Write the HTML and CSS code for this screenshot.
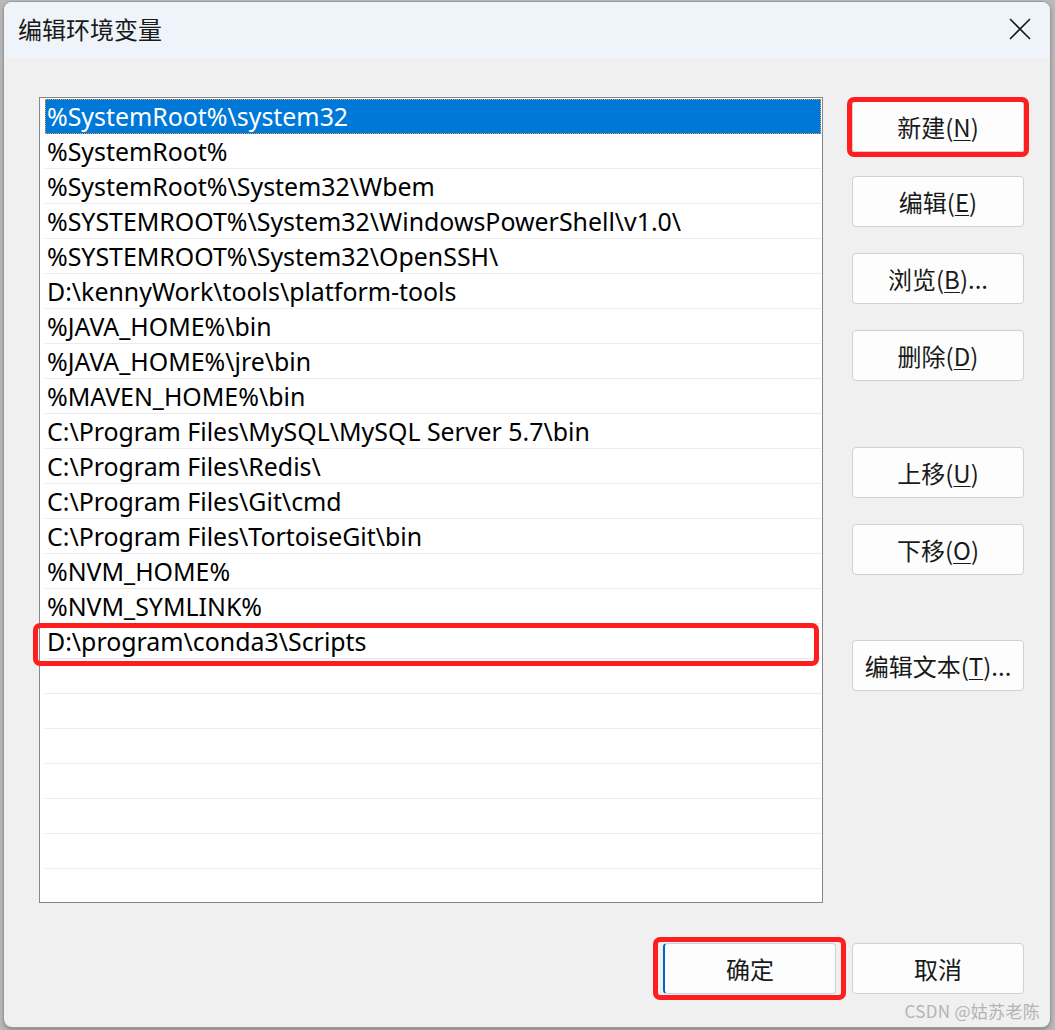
FILE: index.html
```html
<!DOCTYPE html>
<html lang="zh-CN">
<head>
<meta charset="utf-8">
<title>编辑环境变量</title>
<link rel="stylesheet" href="styles.css">
</head>
<body>
<div class="window">
  <div class="titlebar">
    <span class="title">编辑环境变量</span>
    <span class="close">
      <svg width="22" height="22" viewBox="0 0 22 22"><path d="M1 1 L21 21 M21 1 L1 21" stroke="#1a1a1a" stroke-width="1.6" fill="none"/></svg>
    </span>
  </div>
  <div class="content">
    <div class="main">
      <div class="list">
        <div class="row selected">%SystemRoot%\system32</div>
        <div class="row">%SystemRoot%</div>
        <div class="row">%SystemRoot%\System32\Wbem</div>
        <div class="row">%SYSTEMROOT%\System32\WindowsPowerShell\v1.0\</div>
        <div class="row">%SYSTEMROOT%\System32\OpenSSH\</div>
        <div class="row">D:\kennyWork\tools\platform-tools</div>
        <div class="row">%JAVA_HOME%\bin</div>
        <div class="row">%JAVA_HOME%\jre\bin</div>
        <div class="row">%MAVEN_HOME%\bin</div>
        <div class="row">C:\Program Files\MySQL\MySQL Server 5.7\bin</div>
        <div class="row">C:\Program Files\Redis\</div>
        <div class="row">C:\Program Files\Git\cmd</div>
        <div class="row">C:\Program Files\TortoiseGit\bin</div>
        <div class="row">%NVM_HOME%</div>
        <div class="row">%NVM_SYMLINK%</div>
        <div class="row">D:\program\conda3\Scripts</div>
        <div class="row"></div>
        <div class="row"></div>
        <div class="row"></div>
        <div class="row"></div>
        <div class="row"></div>
        <div class="row"></div>
        <div class="row last"></div>
        <div class="mark mark-row"></div>
      </div>
      <div class="side">
        <button class="btn b1">新建(<u>N</u>)<span class="mark mark-btn"></span></button>
        <button class="btn b2">编辑(<u>E</u>)</button>
        <button class="btn b3">浏览(<u>B</u>)...</button>
        <button class="btn b3">删除(<u>D</u>)</button>
        <button class="btn b5">上移(<u>U</u>)</button>
        <button class="btn b3">下移(<u>O</u>)</button>
        <button class="btn b7">编辑文本(<u>T</u>)...</button>
      </div>
    </div>
    <div class="footer">
      <button class="btn ok">确定<span class="mark mark-ok"></span></button>
      <button class="btn cancel">取消</button>
    </div>
  </div>
  <div class="watermark">CSDN @姑苏老陈</div>
</div>
</body>
</html>
```
FILE: styles.css
```css
* { box-sizing: border-box; }
html, body { margin: 0; padding: 0; }
body {
  width: 1055px;
  height: 1030px;
  overflow: hidden;
  background: #b9b9b9;
  font-family: "Noto Sans", "Noto Sans CJK SC", sans-serif;
  padding: 2px 0 0 4px;
}
.window {
  position: relative;
  width: 1046px;
  height: 1025px;
  background: #f0f0f0;
  border-radius: 8px;
  overflow: hidden;
  box-shadow: 0 0 0 1px #9a9a9a, 0 2px 4px rgba(0,0,0,0.35);
}
.titlebar {
  height: 56px;
  background: #eef4f9;
  display: flex;
  align-items: center;
  justify-content: space-between;
  padding: 0 14px 0 14px;
}
.title {
  font-size: 24px;
  color: #1a1a1a;
  font-family: "Noto Sans CJK SC", sans-serif;
  margin-top: -4px;
}
.close { display: flex; margin-right: 5px; margin-top: -2px; }
.content {
  padding: 39px 26px 0 35px;
}
.main {
  display: flex;
  gap: 29px;
}
.list {
  position: relative;
  width: 784px;
  height: 806px;
  background: #fff;
  border: 1px solid #828790;
  padding: 1px 1px 0 5px;
  overflow: visible;
}
.row {
  height: 35px;
  border-bottom: 1px solid #ebebeb;
  font-size: 24.9px;
  line-height: 34px;
  padding-left: 2px;
  color: #000;
  white-space: nowrap;
}
.row.last { border-bottom: none; }
.row.selected {
  background: #0078d7;
  color: #fff;
  border: 1px dotted #f0a030;
  padding-left: 1px;
  line-height: 32px;
}
.side {
  display: flex;
  flex-direction: column;
  width: 172px;
}
.btn {
  position: relative;
  width: 172px;
  height: 51px;
  background: #fdfdfd;
  border: 1px solid #d0d0d0;
  border-radius: 4px;
  font-family: "Noto Sans CJK SC", sans-serif;
  font-size: 24px;
  color: #1a1a1a;
  padding: 0;
  display: flex;
  align-items: center;
  justify-content: center;
}
.btn u { text-underline-offset: 3px; text-decoration-thickness: 1px; }
.b1 { margin-top: 4px; }
.b2 { margin-top: 24px; }
.b3 { margin-top: 26px; }
.b5 { margin-top: 66px; }
.b7 { margin-top: 65px; }
.footer {
  display: flex;
  justify-content: flex-end;
  gap: 16px;
  margin-top: 40px;
}
.ok {
  width: 173px;
  border: 1px solid #bcd5ec;
  border-left: 2px solid #0067c0;
}
.mark {
  position: absolute;
  border: 5px solid #ff1e1e;
  border-radius: 7px;
  pointer-events: none;
}
.mark-row {
  left: -7px;
  top: 525px;
  width: 786px;
  height: 43px;
}
.mark-btn {
  left: -6px;
  top: -5px;
  width: 182px;
  height: 60px;
}
.mark-ok {
  left: -12px;
  top: -7px;
  width: 193px;
  height: 63px;
}
.watermark {
  position: absolute;
  right: 10px;
  bottom: 4px;
  font-size: 17px;
  color: #b4b4b4;
  font-family: "Noto Sans CJK SC", sans-serif;
  letter-spacing: 0.3px;
}
```
